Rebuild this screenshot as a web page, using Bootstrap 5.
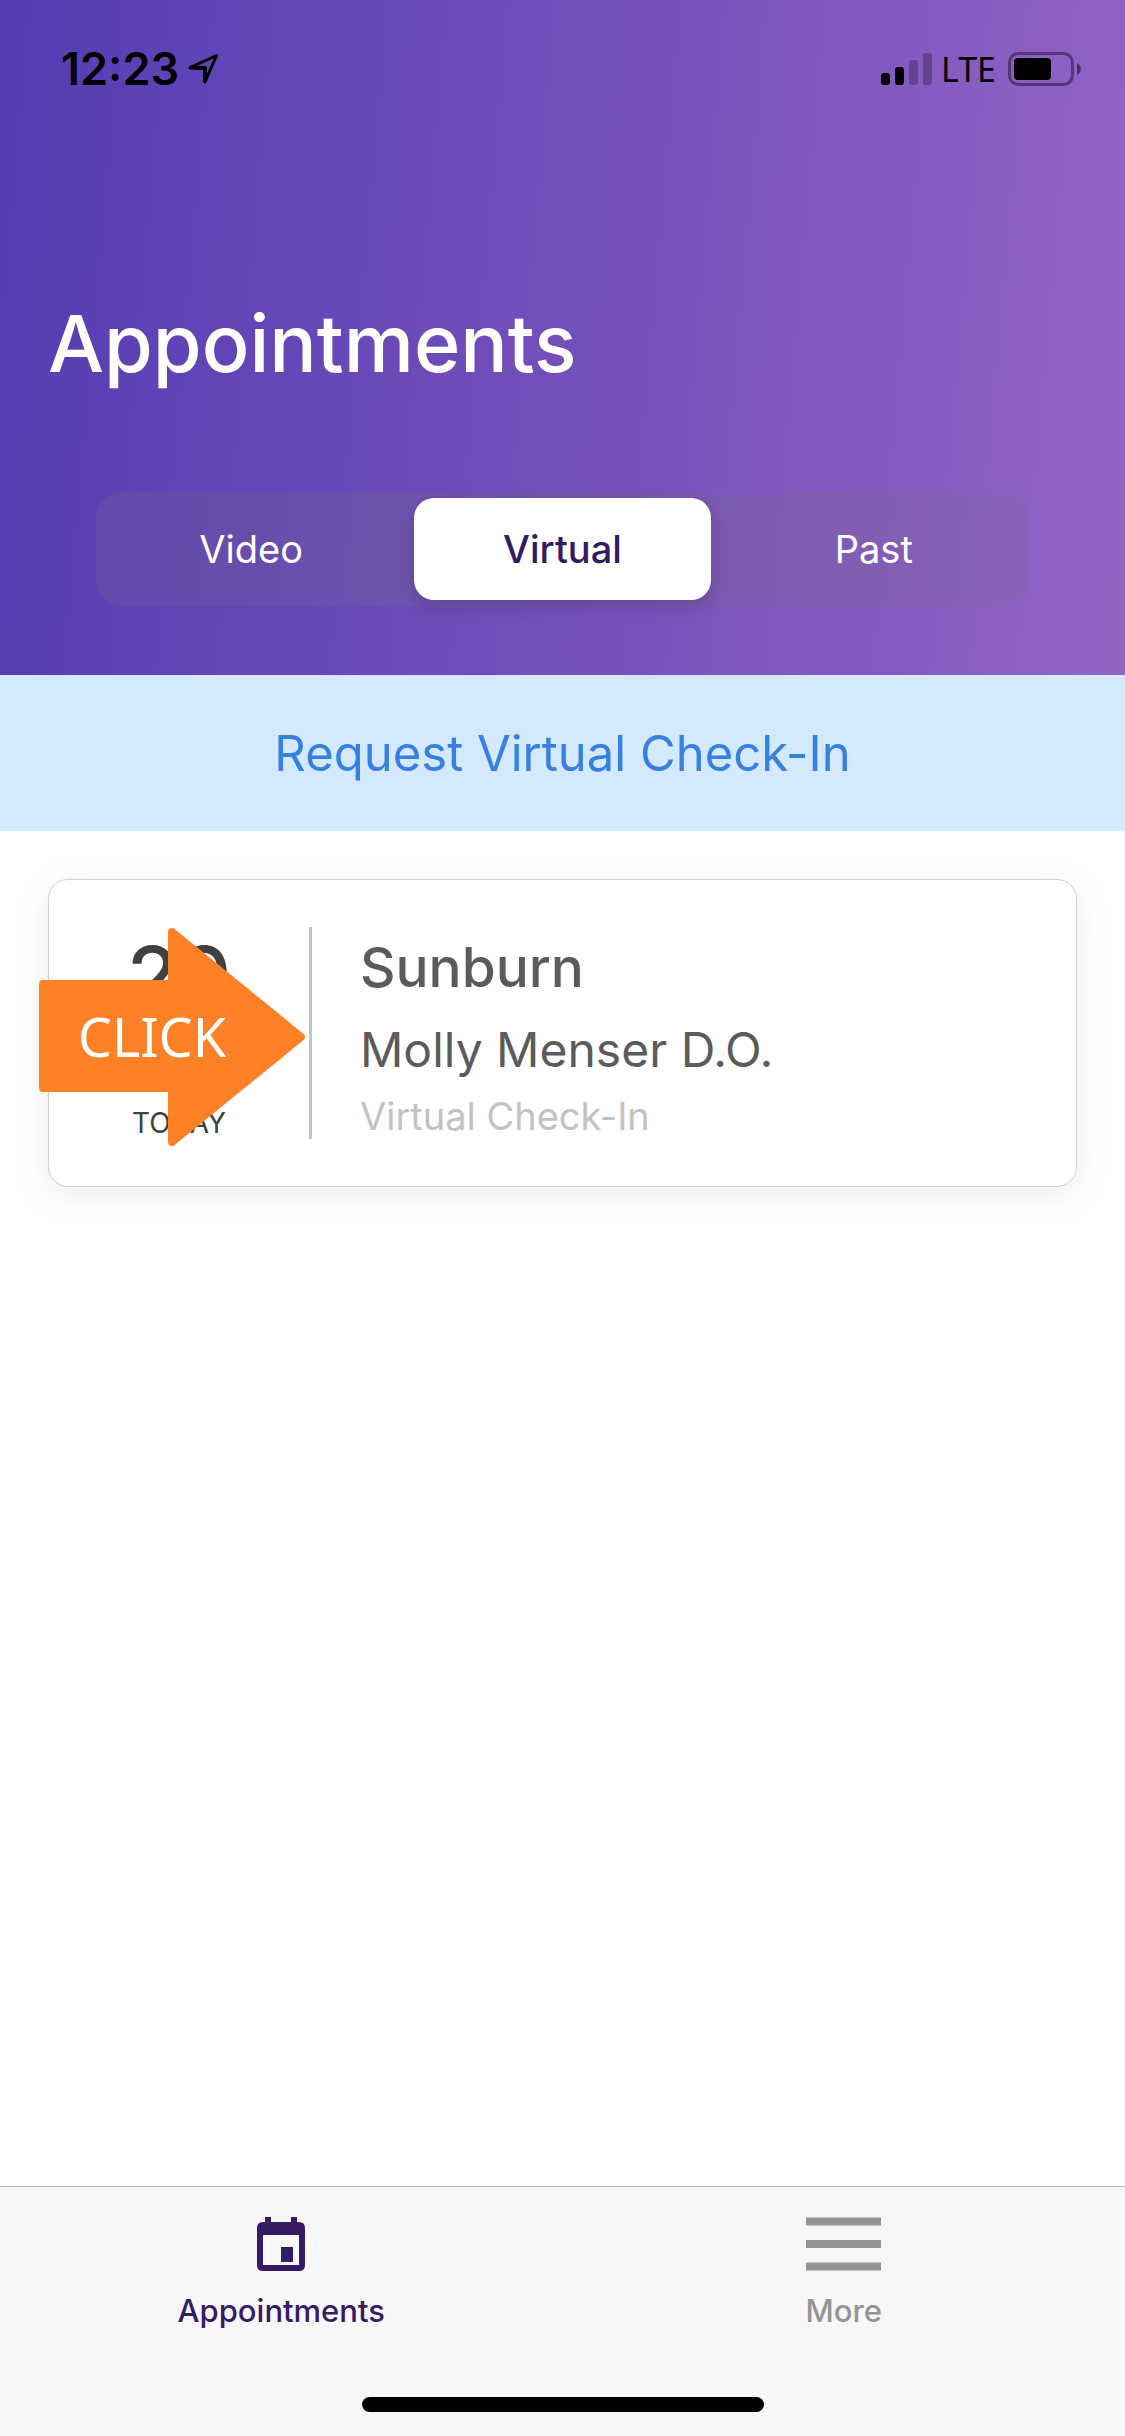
<!DOCTYPE html>
<html lang="en">
<head>
<meta charset="utf-8">
<meta name="viewport" content="width=device-width, initial-scale=1">
<title>Appointments</title>
<link href="https://cdn.jsdelivr.net/npm/bootstrap@5.3.0/dist/css/bootstrap.min.css" rel="stylesheet">
<style>
body { font-family: Inter, "Liberation Sans", sans-serif; background: #fff; }
.app-header { background: linear-gradient(95deg, #523cb2 0%, #6043b6 18%, #6b4ab8 36%, #7651ba 55%, #845ac1 77%, #9264c6 100%); padding: 44px 48px 69px; }
.status-row { height: 50px; padding: 0 0 0 13px; margin-right: -5px; }
.clock { font-size: 45px; line-height: 50px; font-weight: 600; }
.network { font-family: "Noto Sans", sans-serif; font-size: 34px; line-height: 50px; }
.page-title { font-size: 79px; line-height: 98px; font-weight: 500; margin: 200px 0 100px; }
.segments { background: rgba(118, 108, 128, .2); border-radius: 26px; padding: 6px 7px; gap: 15px; margin: 0 48px; }
.segments .nav-link { color: #fff; font-size: 38px; line-height: 54px; padding: 24px 0; border-radius: 20px; }
.segments .nav-link.active { background: #fff; color: #341a62; font-weight: 500; box-shadow: 0 6px 18px rgba(0, 0, 0, .16); }
.request-link { background: #d5e9fe; color: #3681e0; font-size: 49px; line-height: 76px; padding: 41px 0 39px; }
.visit-card { border: 1px solid #d0d0d0; border-radius: 20px; box-shadow: 0 8px 36px rgba(0, 0, 0, .08); margin: 48px; padding: 47px 0; background: #fff; }
.visit-date { width: 260px; border-right: 3px solid #c4c4c4; color: #404040; box-sizing: content-box; }
.visit-day { font-size: 84px; line-height: 100px; font-weight: 500; }
.visit-when { font-size: 28px; line-height: 32px; }
.visit-info { padding-left: 48px; color: #5b5b5b; }
.visit-title { font-size: 55px; line-height: 80px; font-weight: 500; }
.visit-doctor { font-size: 48px; line-height: 86px; }
.visit-kind { font-size: 38px; line-height: 46px; color: #c2c2c2; }
.click-arrow { position: absolute; left: -10px; top: 48px; width: 267px; height: 218px; }
.click-arrow svg { display: block; }
.click-label { position: absolute; left: 0; top: 53px; width: 226px; line-height: 110px; font-family: "Noto Sans", sans-serif; font-size: 54px; color: #fff; text-align: center; }
.tab-strip { background: #f7f7f7; border-top: 1px solid #b2b2b2; padding-top: 30px; }
.tab-strip .nav-link { color: #949494; font-size: 31px; line-height: 40px; padding: 0; font-weight: 500; }
.tab-strip .nav-link.active { color: #371b64; }
.tab-strip svg { display: block; margin: 0 auto 20px; }
.home-bar { width: 402px; height: 15px; border-radius: 8px; background: #000; margin: 66px auto 24px; }
</style>
<script src="https://cdn.jsdelivr.net/npm/bootstrap@5.3.0/dist/js/bootstrap.bundle.min.js"></script>
</head>
<body class="d-flex flex-column min-vh-100">
<header class="app-header">
  <div class="status-row d-flex align-items-center text-black">
    <span class="clock">12:23</span>
    <svg class="ms-2" width="32" height="32" viewBox="0 0 32 32" fill="none" stroke="#000" stroke-width="3" stroke-linejoin="round" aria-hidden="true"><path d="M3 14.500 29.500 2.500 18 29V15z"/><path d="M3 14.500 18 15V29" stroke-width="4"/></svg>
    <svg class="ms-auto" width="52" height="33" viewBox="0 0 52 33" aria-hidden="true"><rect x="0" y="20" width="9" height="12" rx="3"/><rect x="14" y="14" width="9" height="18" rx="3"/><rect x="28" y="7" width="9" height="25" rx="3" opacity=".25"/><rect x="42" y="0" width="9" height="32" rx="3" opacity=".25"/></svg>
    <span class="network ms-2 me-2 pe-1">LTE</span>
    <svg width="74" height="34" viewBox="0 0 74 34" aria-hidden="true"><rect x="1.500" y="1.500" width="63" height="31" rx="9" fill="none" stroke="#000" stroke-opacity=".4" stroke-width="3"/><rect x="6" y="6" width="37" height="22" rx="4"/><path d="M69 11c5 2 5 10 0 12z" opacity=".5"/></svg>
  </div>
  <h1 class="page-title text-white">Appointments</h1>
  <div class="segments nav nav-pills nav-justified flex-nowrap" role="tablist">
    <button type="button" class="nav-link" role="tab" aria-selected="false">Video</button>
    <button type="button" class="nav-link active" role="tab" aria-selected="true">Virtual</button>
    <button type="button" class="nav-link" role="tab" aria-selected="false">Past</button>
  </div>
</header>
<main class="flex-grow-1 d-flex flex-column">
  <a href="#" class="request-link d-block text-center text-decoration-none">Request Virtual Check-In</a>
  <article class="visit-card position-relative d-flex">
    <div class="visit-date d-flex flex-column justify-content-between align-items-center">
      <span class="visit-day">29</span>
      <span class="visit-when">TODAY</span>
    </div>
    <div class="visit-info">
      <div class="visit-title">Sunburn</div>
      <div class="visit-doctor">Molly Menser D.O.</div>
      <div class="visit-kind">Virtual Check-In</div>
    </div>
    <div class="click-arrow">
      <svg width="267" height="218" viewBox="0 0 267 218" aria-hidden="true"><path d="M4 56H133V4L262 109 133 214V160H4z" fill="#ff8127" stroke="#ff8127" stroke-width="8" stroke-linejoin="round"/></svg>
      <span class="click-label">CLICK</span>
    </div>
  </article>
</main>
<footer class="tab-strip">
  <nav class="nav nav-justified">
    <a class="nav-link active" href="#" aria-current="page">
      <svg width="48" height="54" viewBox="0 0 48 54" fill="#371b64" aria-hidden="true"><path fill-rule="evenodd" d="M8 0h6v5h20V0h6v5h2q6 0 6 6v37q0 6-6 6H6q-6 0-6-6V11q0-6 6-6h2zM6 18v30h36V18z"/><path d="M24 30h12v15H24z"/></svg>
      Appointments
    </a>
    <a class="nav-link" href="#">
      <svg width="75" height="54" viewBox="0 0 75 54" fill="#949494" aria-hidden="true"><path d="M0 .5h75v8H0zM0 23h75v8H0zM0 45.500h75v8H0z"/></svg>
      More
    </a>
  </nav>
  <div class="home-bar"></div>
</footer>
</body>
</html>
